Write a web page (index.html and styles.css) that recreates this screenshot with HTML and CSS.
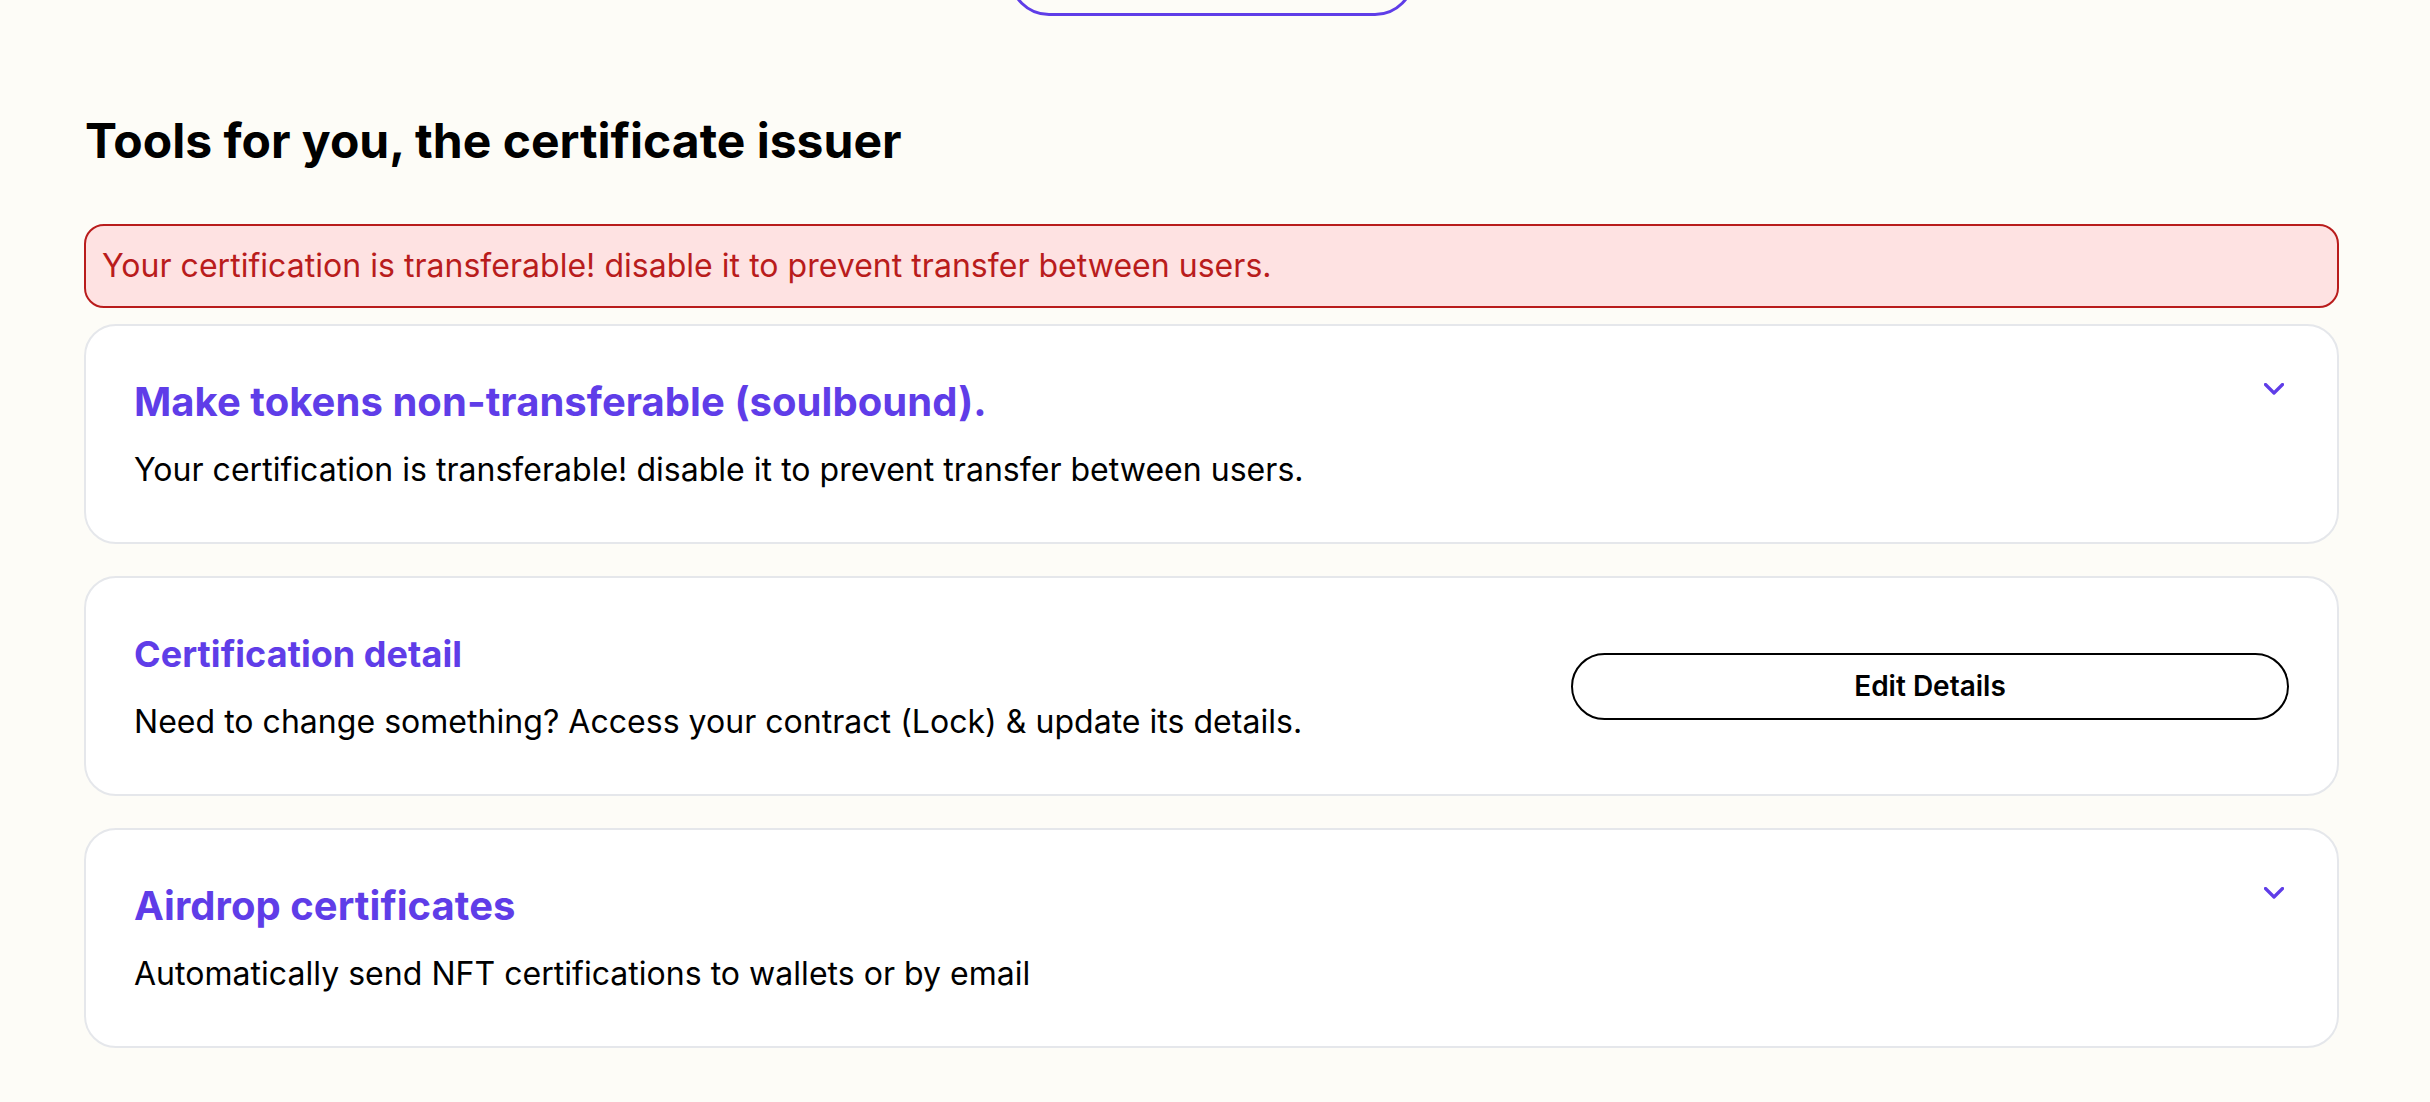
FILE: index.html
```html
<!DOCTYPE html>
<html lang="en">
<head>
<meta charset="utf-8">
<title>Tools for you, the certificate issuer</title>
<link rel="stylesheet" href="styles.css">
</head>
<body>
<main class="page">
  <div class="top-action">
    <button class="outline-btn" type="button" aria-label="Action"></button>
  </div>

  <h1 class="page-title">Tools for you, the certificate issuer</h1>

  <div class="alert">Your certification is transferable! disable it to prevent transfer between users.</div>

  <section class="card">
    <div class="card-head">
      <div class="card-text">
        <h2 class="card-title">Make tokens non-transferable (soulbound).</h2>
        <p class="card-desc">Your certification is transferable! disable it to prevent transfer between users.</p>
      </div>
      <svg class="chevron" width="20" height="12" viewBox="0 0 20 12" aria-hidden="true"><path d="M1.5 1.5 L10 10 L18.5 1.5" fill="none" stroke="#5f3de8" stroke-width="3.2" stroke-linecap="round" stroke-linejoin="round"/></svg>
    </div>
  </section>

  <section class="card">
    <div class="card-row">
      <div class="card-text">
        <h2 class="card-title card-title-sm">Certification detail</h2>
        <p class="card-desc">Need to change something? Access your contract (Lock) &amp; update its details.</p>
      </div>
      <button class="edit-btn" type="button">Edit Details</button>
    </div>
  </section>

  <section class="card">
    <div class="card-head">
      <div class="card-text">
        <h2 class="card-title">Airdrop certificates</h2>
        <p class="card-desc">Automatically send NFT certifications to wallets or by email</p>
      </div>
      <svg class="chevron" width="20" height="12" viewBox="0 0 20 12" aria-hidden="true"><path d="M1.5 1.5 L10 10 L18.5 1.5" fill="none" stroke="#5f3de8" stroke-width="3.2" stroke-linecap="round" stroke-linejoin="round"/></svg>
    </div>
  </section>
</main>
</body>
</html>
```

FILE: styles.css
```css
* {
  box-sizing: border-box;
}

html, body {
  margin: 0;
  padding: 0;
  background: #fdfcf7;
}

body {
  font-family: Inter, "Noto Sans", "Liberation Sans", sans-serif;
  color: #000;
  min-height: 1102px;
}

.page {
  padding: 0 91px 0 84px;
}

.top-action {
  height: 16px;
  display: flex;
  justify-content: center;
  align-items: flex-end;
  overflow: hidden;
}

.outline-btn {
  flex: none;
  width: 406px;
  height: 80px;
  border: 3px solid #5f3de8;
  border-radius: 9999px;
  background: transparent;
  padding: 0;
}

.page-title {
  margin: 93px 0 51px;
  padding-left: 1px;
  font-size: 48px;
  line-height: 64px;
  font-weight: 700;
  color: #000;
}

.alert {
  border: 2px solid #b91c1c;
  background: #fee2e2;
  color: #b91c1c;
  border-radius: 20px;
  padding: 16px 16px;
  font-size: 32px;
  line-height: 48px;
  margin-bottom: 16px;
  letter-spacing: 0.03px;
}

.card {
  background: #fff;
  border: 2px solid #e5e7eb;
  border-radius: 32px;
  padding: 48px;
  margin-bottom: 32px;
}

.card-head {
  display: flex;
  justify-content: space-between;
  align-items: flex-start;
}

.card-row {
  display: flex;
  align-items: center;
  justify-content: space-between;
}

.card-text {
  flex: 1;
  min-width: 0;
}

.card-title {
  margin: 0 0 16px;
  font-size: 40px;
  line-height: 56px;
  font-weight: 700;
  color: #5f3de8;
  letter-spacing: 0.05px;
}

.card-title-sm {
  font-size: 36px;
}

.card-desc {
  margin: 0;
  font-size: 32px;
  line-height: 48px;
  font-weight: 400;
  color: #000;
  letter-spacing: 0.03px;
}

.chevron {
  flex: none;
  margin-top: 9px;
  margin-right: 5px;
}

.edit-btn {
  flex: none;
  width: 718px;
  height: 67px;
  border: 2px solid #000;
  border-radius: 9999px;
  background: #fff;
  color: #000;
  font-family: Inter, "Noto Sans", "Liberation Sans", sans-serif;
  font-size: 28px;
  font-weight: 600;
  line-height: 40px;
  padding: 0 24px;
}
```
